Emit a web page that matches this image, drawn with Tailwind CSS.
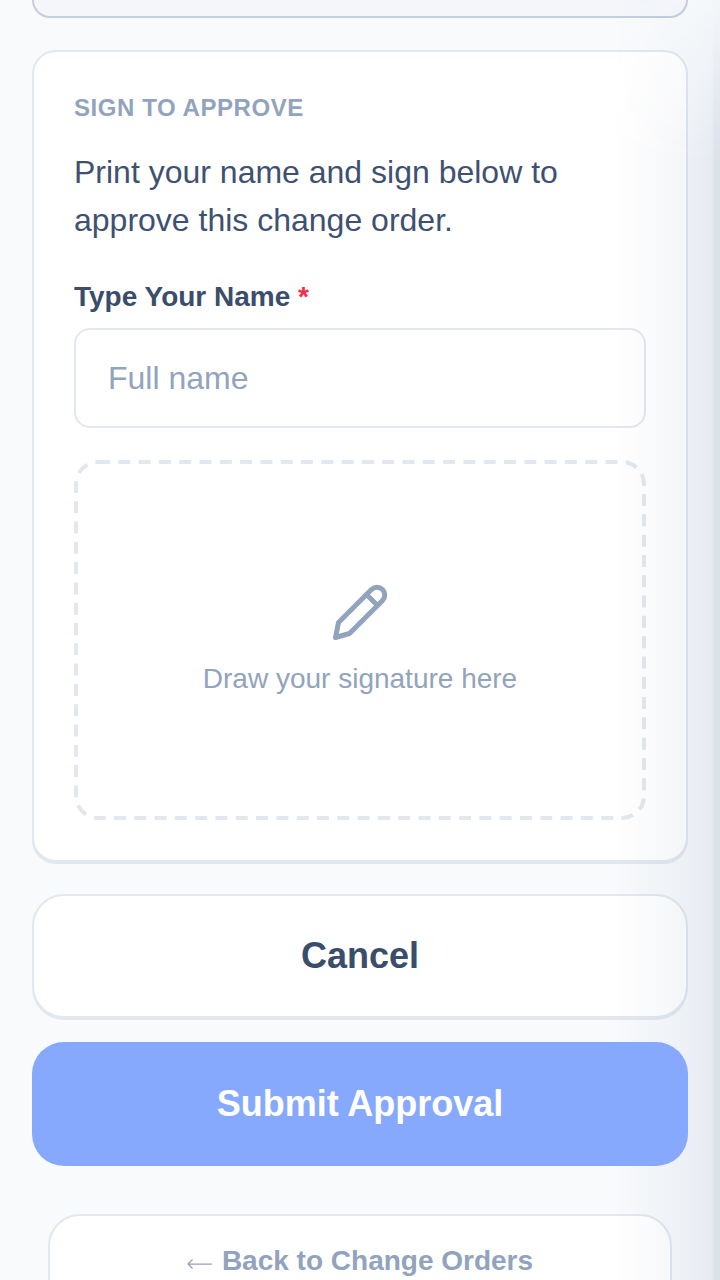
<!DOCTYPE html>
<html lang="en">
<head>
<meta charset="UTF-8">
<meta name="viewport" content="width=device-width, initial-scale=1.0">
<title>Sign to Approve</title>
<script src="https://cdn.jsdelivr.net/npm/@tailwindcss/browser@4"></script>
</head>
<body class="bg-[#f8fafc] font-['Liberation_Sans',Arial,sans-serif]">
<div class="relative h-[1280px] w-[720px] overflow-hidden">
  <div class="flex flex-col px-8">
    <!-- tail of the card above -->
    <div class="h-[18px] rounded-b-[20px] border-x-2 border-b-2 border-[#c5cede] bg-[#f4f6fa]"></div>

    <section class="mt-8 flex h-[812px] flex-col rounded-[24px] border-2 border-[#e2e8f0] bg-white px-10 pt-10 shadow-[0_2px_0_#e2e8f0]">
      <h2 class="text-[24px] leading-[32px] font-bold tracking-[0.56px] text-[#92a3bd]">SIGN TO APPROVE</h2>
      <p class="mt-6 text-[32px] leading-[48px] text-[#3e5170]">Print your name and sign below to approve this change order.</p>
      <label class="mt-[33px] text-[28px] leading-[40px] font-bold text-[#3a4d6a]">Type Your Name <span class="text-[#f52e48]">*</span></label>
      <input type="text" placeholder="Full name" class="mt-[11px] h-[100px] w-full rounded-[16px] border-2 border-[#e2e8f0] bg-white px-8 text-[32px] text-[#3a4d6a] outline-none placeholder:text-[#92a3bd]">
      <div class="relative mt-8 flex h-[360px] flex-col items-center justify-center">
        <svg class="absolute inset-0 h-full w-full" viewBox="0 0 572 360" fill="none">
          <rect x="2" y="2" width="568" height="356" rx="22" stroke="#e2e8f0" stroke-width="4" stroke-dasharray="12 8.3"/>
        </svg>
        <svg class="h-[64px] w-[64px]" viewBox="0 0 64 64" fill="none" stroke="#92a3bd" stroke-width="5" stroke-linejoin="round" stroke-linecap="round">
          <path d="M7.500 56.500L10.500 41.500L43.500 8.500A7.700 7.700 0 0 1 54.500 19.500L21.500 52.500Z"/>
          <path d="M38.500 13.500L49.500 24.500"/>
        </svg>
        <p class="mt-[14px] text-[28px] leading-[40px] text-[#92a3bd]">Draw your signature here</p>
      </div>
    </section>

    <button class="mt-8 h-[124px] w-full rounded-[32px] border-2 border-[#e2e8f0] bg-white text-[36px] font-bold text-[#3a4d6a] shadow-[0_2px_0_#e2e8f0]">Cancel</button>
    <button class="relative z-10 mt-6 h-[124px] w-full rounded-[32px] bg-[#87a9fd] text-[36px] font-bold text-white">Submit Approval</button>

    <a class="mx-4 mt-12 flex h-[100px] items-start justify-center gap-[10px] rounded-[32px] border-2 border-[#e2e8f0] bg-white pt-[25px] text-[28px] leading-[40px] font-bold text-[#92a3bd]">
      <svg class="mt-[15px] h-[16px] w-[25px]" viewBox="0 0 25 16" fill="none" stroke="#92a3bd" stroke-width="1.250"><path d="M1 8H25M5.500 3.500L1 8l4.500 4.500"/></svg>
      <span>Back to Change Orders</span>
    </a>
  </div>
  <!-- soft shadow on the right edge -->
  <div class="pointer-events-none absolute inset-y-0 right-0 w-[110px] bg-[linear-gradient(to_right,transparent_0,rgba(90,110,150,0.03)_40px,rgba(90,110,150,0.07)_80px,rgba(90,110,150,0.11)_102px,rgba(90,110,150,0.17)_104px,rgba(90,110,150,0.18)_110px)] [mask-image:linear-gradient(to_bottom,rgba(0,0,0,0.15)_0,black_160px)]"></div>
</div>
</body>
</html>
